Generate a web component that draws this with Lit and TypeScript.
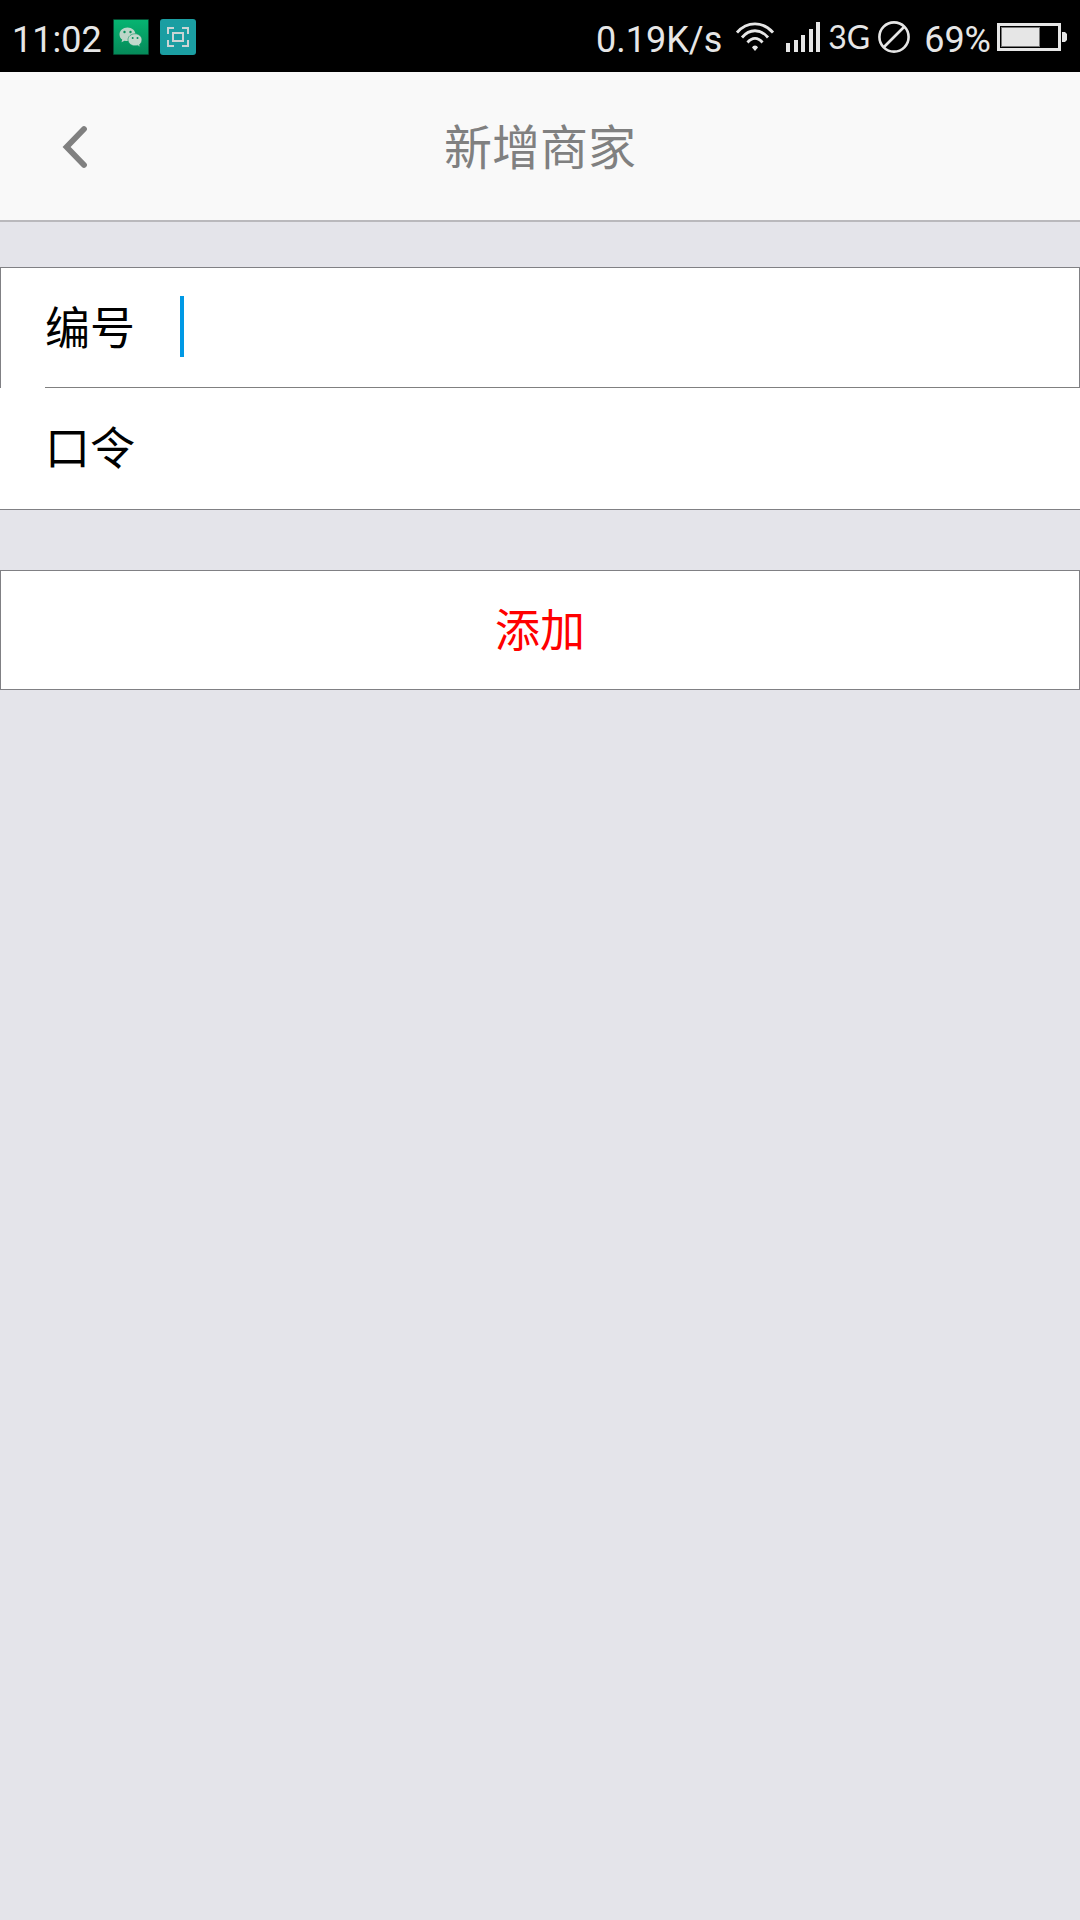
import { LitElement, html, css } from "lit";
import { customElement, state } from "lit/decorators.js";

@customElement("status-bar")
export class StatusBar extends LitElement {
  static styles = css`
    :host {
      display: block;
      background: #000;
      color: #e6e6e6;
      font-family: Roboto, "Liberation Sans", sans-serif;
      font-size: 36px;
      line-height: 42px;
    }
    .bar {
      box-sizing: border-box;
      height: 72px;
      padding: 2px 13px 0 12px;
      display: flex;
      align-items: center;
      justify-content: space-between;
    }
    .group {
      display: flex;
      align-items: center;
      gap: 12px;
    }
    .apps {
      gap: 11px;
    }
    .signals {
      gap: 8px;
    }
    .text {
      padding-top: 6px;
    }
    .speed {
      margin-right: 6px;
    }
    .network {
      font-family: Lato, Roboto, sans-serif;
      font-size: 32px;
    }
    .cell {
      margin-left: 4px;
    }
    .charge {
      display: flex;
      align-items: center;
      gap: 6px;
      margin-left: 6px;
    }
    svg {
      display: block;
      flex: none;
    }
  `;

  render() {
    return html`
      <div class="bar">
        <div class="group apps">
          <span class="text">11:02</span>
          <svg width="36" height="36" viewBox="0 0 36 36" aria-hidden="true">
            <defs>
              <linearGradient id="chat" x1="0" y1="0" x2="0" y2="1">
                <stop offset="0" stop-color="#06b471" />
                <stop offset="1" stop-color="#058a59" />
              </linearGradient>
            </defs>
            <rect width="36" height="36" rx="1" fill="#034c31" />
            <rect x="1" y="1" width="34" height="34" fill="url(#chat)" />
            <path d="M14.500 8.500c-4.500 0-8 3-8 6.900 0 2.100 1 3.900 2.700 5.200l-.7 2.600 3-1.500c1 .3 2 .4 3 .4 4.500 0 8-3 8-6.700s-3.500-6.900-8-6.900z" fill="#bcd6c8" />
            <circle cx="11.500" cy="13" r="1.200" fill="#07905c" />
            <circle cx="17.500" cy="13" r="1.200" fill="#07905c" />
            <path d="M22 14.800c-4 0-7 2.700-7 6s3 6 7 6c.9 0 1.700-.1 2.500-.4l2.700 1.500-.7-2.300c1.500-1.200 2.400-2.900 2.400-4.800 0-3.300-3-6-6.900-6z" fill="#c3d8cc" stroke="#079660" stroke-width=".6" />
            <circle cx="19.700" cy="19" r="1" fill="#07905c" />
            <circle cx="24.500" cy="19" r="1" fill="#07905c" />
          </svg>
          <svg width="36" height="36" viewBox="0 0 36 36" aria-hidden="true">
            <rect width="36" height="36" rx="3" fill="#1b9ea2" />
            <g fill="none" stroke="#cbd5d5" stroke-width="2">
              <path d="M8 15V9h6M22 9h6v6M28 21v6h-6M14 27H8v-6" />
              <rect x="13" y="14" width="10" height="8" />
            </g>
          </svg>
        </div>
        <div class="group signals">
          <span class="text speed">0.19K/s</span>
          <svg width="38" height="30" viewBox="0 0 38 30" aria-hidden="true">
            <g fill="none" stroke="#e6e6e6" stroke-width="2.800">
              <path d="M1 10.500C11 -1 27 -1 37 10.500" />
              <path d="M6 15.500C13.500 6.500 24.500 6.500 32 15.500" />
              <path d="M11.500 20.500C16 15 22 15 26.500 20.500" />
            </g>
            <path d="M16 25.500a3.200 3.200 0 0 1 6 0L19 29z" fill="#e6e6e6" />
          </svg>
          <svg class="cell" width="34" height="30" viewBox="0 0 34 30" fill="#e6e6e6" aria-hidden="true">
            <path d="M0 21h4v9H0zM8 18h4v12H8zM15 13h4v17h-4zM23 7h4v23h-4zM30 0h4v30h-4z" />
          </svg>
          <span class="network">3G</span>
          <svg width="32" height="32" viewBox="0 0 32 32" fill="none" stroke="#e6e6e6" stroke-width="2.600" aria-hidden="true">
            <circle cx="16" cy="16" r="14.600" />
            <path d="M6 26L26 6" />
          </svg>
          <div class="charge">
            <span class="text">69%</span>
            <svg width="70" height="28" viewBox="0 0 70 28" aria-hidden="true">
              <rect x="1.500" y="1.500" width="61" height="25" fill="none" stroke="#e6e6e6" stroke-width="3" />
              <rect x="4" y="4" width="39" height="20" fill="#777" />
              <rect x="5" y="5" width="37" height="18" fill="#e6e6e6" />
              <path d="M65 9h3l2 2v6l-2 2h-3z" fill="#e6e6e6" />
            </svg>
          </div>
        </div>
      </div>
    `;
  }
}

@customElement("app-root")
export class AppRoot extends LitElement {
  static styles = css`
    :host {
      display: block;
      min-height: 100vh;
      background: #e4e4ea;
      color: #000;
      font-family: "Noto Sans CJK SC", sans-serif;
      font-size: 45px;
      line-height: 60px;
    }
    .header {
      box-sizing: border-box;
      height: 150px;
      display: grid;
      grid-template-columns: 150px 1fr 150px;
      align-items: center;
      background: #f9f9f9;
      border-bottom: 2px solid #b9b8bc;
      color: #808080;
    }
    .back {
      height: 148px;
      padding: 2px 0 0;
      border: 0;
      background: none;
      color: inherit;
      display: grid;
      place-items: center;
    }
    .title {
      margin: 0;
      padding-bottom: 4px;
      font-size: 48px;
      font-weight: 400;
      text-align: center;
    }
    .fields {
      margin-top: 45px;
      background: #fff;
      border-bottom: 1px solid #808084;
    }
    .row {
      box-sizing: border-box;
      height: 121px;
      padding-left: 45px;
      display: flex;
    }
    .first {
      padding-left: 44px;
      border: 1px solid #808084;
      border-bottom: 0;
    }
    .label {
      width: 135px;
      line-height: 116px;
    }
    .box {
      position: relative;
      flex: 1;
      display: flex;
    }
    .first .label,
    .first .box {
      box-sizing: border-box;
      border-bottom: 1px solid #808080;
    }
    .input {
      flex: 1;
      min-width: 0;
      padding: 0;
      border: 0;
      outline: 0;
      background: none;
      color: inherit;
      font: inherit;
      caret-color: transparent;
    }
    .input:not(:placeholder-shown) {
      caret-color: #0099e5;
    }
    .caret {
      position: absolute;
      left: 0;
      top: 28px;
      width: 4px;
      height: 61px;
      background: #0099e5;
    }
    .submit {
      box-sizing: border-box;
      display: block;
      width: 100%;
      height: 120px;
      margin: 60px 0 0;
      padding: 0 0 4px;
      border: 1px solid #808084;
      border-radius: 0;
      background: #fff;
      color: #f00;
      font: inherit;
    }
  `;

  @state() private code = "";
  @state() private pass = "";

  render() {
    return html`
      <status-bar></status-bar>
      <header class="header">
        <button class="back" type="button" aria-label="返回">
          <svg width="26" height="44" viewBox="0 0 26 44" fill="none" stroke="currentColor" stroke-width="5.800" stroke-linecap="round" aria-hidden="true">
            <path d="M22 4L4.600 22l17.400 18" />
          </svg>
        </button>
        <h1 class="title">新增商家</h1>
      </header>
      <form @submit=${(e: Event) => e.preventDefault()}>
        <div class="fields">
          <div class="row first">
            <label class="label" for="code">编号</label>
            <div class="box">
              <input class="input" id="code" type="text" placeholder=" " .value=${this.code}
                @input=${(e: Event) => (this.code = (e.target as HTMLInputElement).value)} />
              ${this.code ? "" : html`<span class="caret"></span>`}
            </div>
          </div>
          <div class="row">
            <label class="label" for="pass">口令</label>
            <div class="box">
              <input class="input" id="pass" type="password" placeholder=" " .value=${this.pass}
                @input=${(e: Event) => (this.pass = (e.target as HTMLInputElement).value)} />
            </div>
          </div>
        </div>
        <button class="submit" type="submit">添加</button>
      </form>
    `;
  }
}
